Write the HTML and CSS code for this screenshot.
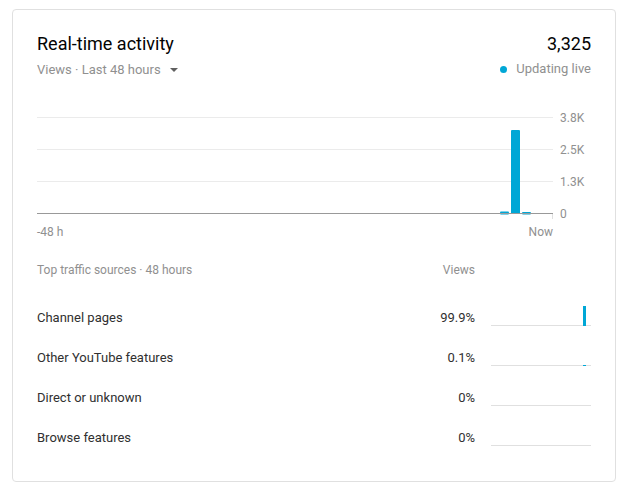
FILE: index.html
```html
<!DOCTYPE html>
<html lang="en">
<head>
    <meta charset="UTF-8">
    <meta name="viewport" content="width=device-width, initial-scale=1.0">
    <title>Real-time activity</title>
    <link rel="stylesheet" href="styles.css">
</head>
<body>
    <div class="card">
        <!-- Header -->
        <div class="card-head">
            <div>
                <h2 class="title">Real-time activity</h2>
                <div class="subtitle">
                    Views · Last 48 hours
                    <svg class="caret" width="8" height="4" viewBox="0 0 8 4"><path d="M0 0h8L4 4z" fill="#606060"/></svg>
                </div>
            </div>
            <div class="head-right">
                <div class="total">3,325</div>
                <div class="live"><span class="live-dot"></span>Updating live</div>
            </div>
        </div>

        <!-- Chart -->
        <div class="chart">
            <div class="plot">
                <svg class="plot-svg" width="516" height="104" viewBox="0 0 516 104">
                    <line x1="0" y1="0.5" x2="516" y2="0.5" stroke="#ebebeb"/>
                    <line x1="0" y1="32.5" x2="516" y2="32.5" stroke="#ebebeb"/>
                    <line x1="0" y1="64.5" x2="516" y2="64.5" stroke="#ebebeb"/>
                    <line x1="515.5" y1="97" x2="515.5" y2="102" stroke="#e0e0e0"/>
                    <rect x="463" y="94.5" width="9" height="3" rx="1" fill="#00a7d6"/>
                    <rect x="474" y="13" width="9" height="84" rx="1" fill="#00a7d6"/>
                    <rect x="485" y="95" width="9" height="2.5" rx="1" fill="#00a7d6"/>
                    <line x1="0" y1="96.5" x2="516" y2="96.5" stroke="#999"/>
                </svg>
                <div class="x-labels"><span>-48 h</span><span>Now</span></div>
            </div>
            <div class="y-labels">
                <span>3.8K</span>
                <span>2.5K</span>
                <span>1.3K</span>
                <span>0</span>
            </div>
        </div>

        <!-- Traffic sources -->
        <div class="sources">
            <div class="sources-head">
                <span class="source-name">Top traffic sources · 48 hours</span>
                <span class="source-pct">Views</span>
                <span class="spark-blank"></span>
            </div>
            <div class="source-list">
                <div class="source-row">
                    <span class="source-name">Channel pages</span>
                    <span class="source-pct">99.9%</span>
                    <div class="spark"><div class="spark-bar" style="height:20px"></div></div>
                </div>
                <div class="source-row">
                    <span class="source-name">Other YouTube features</span>
                    <span class="source-pct">0.1%</span>
                    <div class="spark"><div class="spark-bar" style="height:1px"></div></div>
                </div>
                <div class="source-row">
                    <span class="source-name">Direct or unknown</span>
                    <span class="source-pct">0%</span>
                    <div class="spark"></div>
                </div>
                <div class="source-row">
                    <span class="source-name">Browse features</span>
                    <span class="source-pct">0%</span>
                    <div class="spark"></div>
                </div>
            </div>
        </div>
    </div>
</body>
</html>
```

FILE: styles.css
```css
body {
    margin: 0;
    background-color: #fff;
    font-family: Roboto, "Liberation Sans", Arial, sans-serif;
    color: #0d0d0d;
}

.card {
    width: 604px;
    box-sizing: border-box;
    margin: 9px 0 0 12px;
    padding: 22px 24px 23px;
    border: 1px solid #e0e0e0;
    border-radius: 4px;
}

.card-head {
    display: flex;
    justify-content: space-between;
}

.title {
    margin: 0;
    font-size: 18px;
    font-weight: 400;
    line-height: 24px;
    color: #030303;
}

.subtitle {
    margin-top: 4px;
    font-size: 13px;
    line-height: 20px;
    color: #909090;
    display: flex;
    align-items: center;
}

.caret {
    margin-left: 9px;
}

.head-right {
    display: flex;
    flex-direction: column;
    align-items: flex-end;
}

.total {
    font-size: 18px;
    line-height: 24px;
    color: #030303;
}

.live {
    margin-top: 3px;
    font-size: 13px;
    line-height: 20px;
    color: #909090;
    display: flex;
    align-items: center;
}

.live-dot {
    width: 7px;
    height: 7px;
    border-radius: 50%;
    background-color: #00a7d6;
    margin-right: 9px;
}

/* chart */
.chart {
    display: flex;
    gap: 7px;
    margin-top: 21px;
}

.plot {
    width: 516px;
}

.plot-svg {
    display: block;
    margin-top: 16px;
}

.x-labels {
    display: flex;
    justify-content: space-between;
    margin-top: 3px;
    font-size: 12px;
    line-height: 16px;
    color: #909090;
}

.y-labels {
    display: flex;
    flex-direction: column;
    padding-top: 1px;
    font-size: 12px;
    line-height: 32px;
    color: #909090;
}

/* traffic sources */
.sources {
    margin-top: 22px;
}

.sources-head {
    display: flex;
    font-size: 12px;
    line-height: 16px;
    color: #909090;
}

.source-list {
    margin-top: 20px;
}

.source-row {
    display: flex;
    height: 40px;
    font-size: 13px;
    line-height: 20px;
    color: #303030;
}

.source-name {
    flex: 1;
    padding-top: 10px;
}

.sources-head .source-name,
.sources-head .source-pct {
    padding-top: 0;
}

.source-pct {
    padding-top: 10px;
    text-align: right;
}

.spark,
.spark-blank {
    width: 100px;
    margin-left: 16px;
}

.spark {
    height: 20px;
    margin-top: 8px;
    display: flex;
    justify-content: flex-end;
    align-items: flex-end;
    box-shadow: inset 0 -1px 0 #e0e0e0;
}

.spark-bar {
    width: 3px;
    margin-right: 5px;
    background-color: #00a7d6;
}
```
